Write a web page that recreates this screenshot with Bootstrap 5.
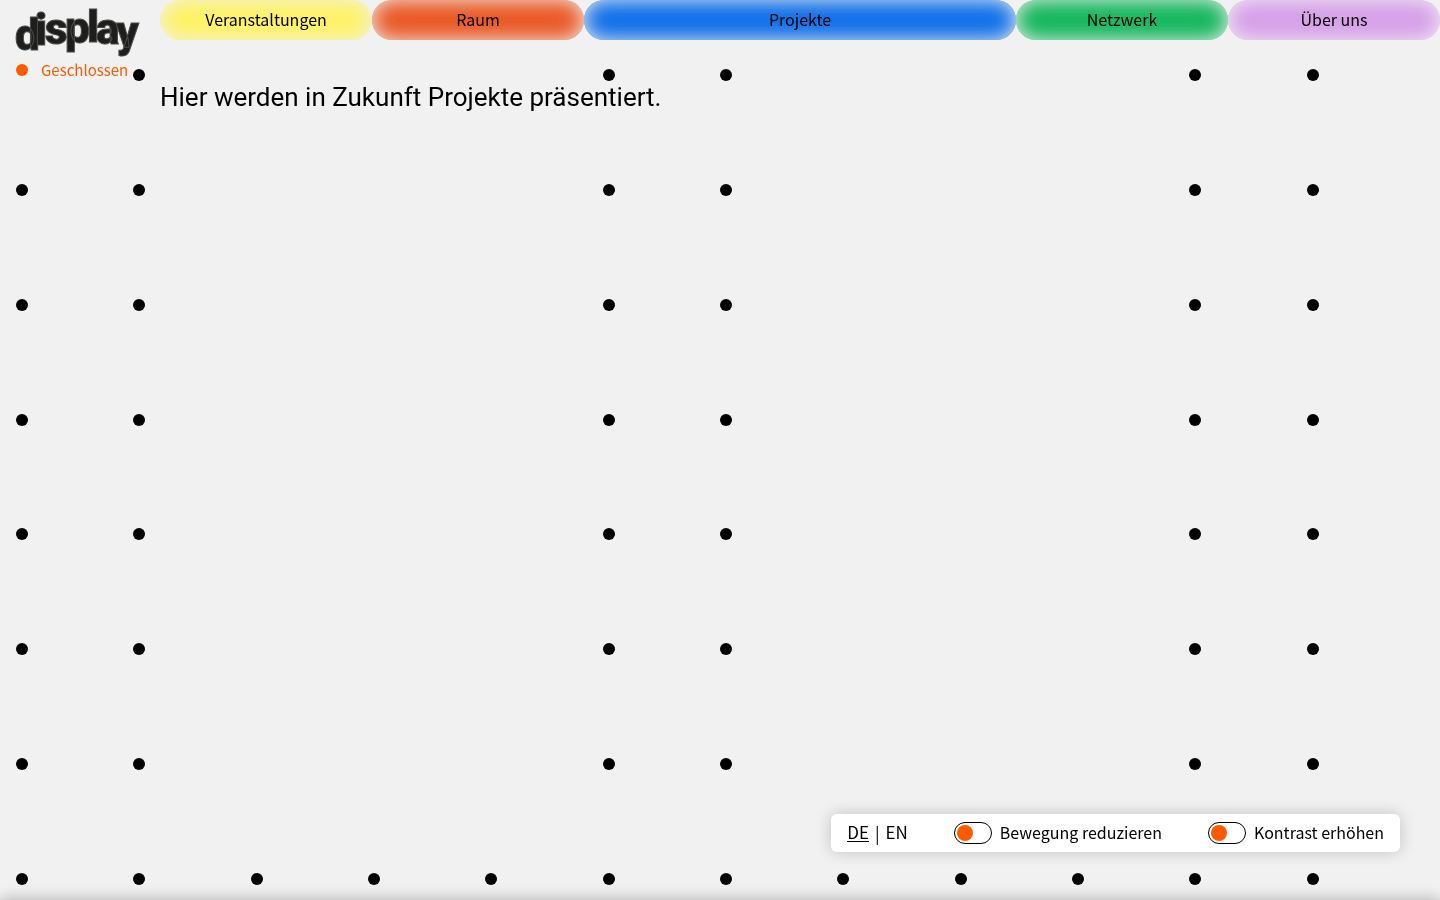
<!DOCTYPE html>
<html lang="de">
<head>
<meta charset="utf-8">
<meta name="viewport" content="width=device-width, initial-scale=1">
<title>display – Projekte</title>
<link href="https://cdn.jsdelivr.net/npm/bootstrap@5.3.0/dist/css/bootstrap.min.css" rel="stylesheet">
<style>
  :root { --paper: #f1f1f1; --accent: #ff5a00; }
  body { background: var(--paper); color: #000; font: 16px/24px "Noto Sans CJK JP", "Noto Sans", sans-serif; overflow: hidden; }
  a { color: inherit; text-decoration: none; }
  .brand-col { width: 160px; padding-left: 16px; }
  .wordmark { display: block; width: 128px; height: 60px; overflow: visible; }
  .wordmark text { font: 900 44px Roboto, sans-serif; fill: #1e1e1c; stroke: #4a4a48; stroke-width: 1px; }
  .status { color: var(--accent); font-size: 15px; line-height: 20px; gap: 13px; }
  .spot { width: 12px; height: 12px; border-radius: 50%; background: currentColor; }
  .main-nav { display: grid; grid-template-columns: 53fr 53fr 108fr 53fr 53fr; }
  .pill { height: 40px; padding-bottom: 2px; border-radius: 20px; box-shadow: inset 0 0 20px var(--paper); }
  .pill-yellow { background: #fef264; }
  .pill-orange { background: #ea5824; }
  .pill-blue { background: #0f6fe9; }
  .pill-green { background: #13b65c; }
  .pill-lilac { background: #d69fe8; }
  .intro { font: 26px/36px Roboto, sans-serif; margin-top: 39px; }
  /* dot raster behind the page */
  .raster { top: 69px; bottom: 15px; z-index: -1; padding: 0 16px; }
  .raster-row { display: grid; grid-template-columns: repeat(12, 1fr); }
  .options { right: 40px; bottom: 48px; height: 38px; padding: 0 16px; gap: 46px; border-radius: 6px; box-shadow: 0 0 16px rgba(0, 0, 0, .2); }
  .options label { padding-bottom: 2px; }
  .languages { font-size: 17px; gap: 6px; line-height: 18px; padding-bottom: 1px; }
  .languages a { border-bottom: 1px solid transparent; }
  .languages .current { border-color: #000; }
  .toggle { appearance: none; width: 38px; height: 22px; margin: 0; border: 1px solid #000; border-radius: 11px; display: flex; align-items: center; padding-left: 2px; background: #fff; }
  .toggle::before { content: ""; width: 16px; height: 16px; border-radius: 50%; background: var(--accent); }
  .toggle:checked { justify-content: flex-end; padding: 0 2px 0 0; }
  .drawer { top: 100%; height: 40px; box-shadow: 0 0 16px rgba(0, 0, 0, .3); }
</style>
</head>
<body>
<div class="raster position-fixed start-0 end-0 d-flex flex-column justify-content-between" id="raster" aria-hidden="true"></div>

<div class="d-flex">
  <header class="brand-col flex-shrink-0">
    <a href="#" aria-label="display">
      <svg class="wordmark" viewBox="0 0 128 60"><text x="-1 19 29 49 71 80 100" y="50 45 44 43 42 44 47">display</text></svg>
    </a>
    <a href="#" class="status d-flex align-items-center"><span class="spot"></span>Geschlossen</a>
  </header>
  <div class="flex-grow-1">
    <nav class="main-nav" aria-label="Hauptnavigation">
      <a class="pill pill-yellow d-flex align-items-center justify-content-center" href="#">Veranstaltungen</a>
      <a class="pill pill-orange d-flex align-items-center justify-content-center" href="#">Raum</a>
      <a class="pill pill-blue d-flex align-items-center justify-content-center" href="#" aria-current="page">Projekte</a>
      <a class="pill pill-green d-flex align-items-center justify-content-center" href="#">Netzwerk</a>
      <a class="pill pill-lilac d-flex align-items-center justify-content-center" href="#">Über uns</a>
    </nav>
    <main><p class="intro mb-0">Hier werden in Zukunft Projekte präsentiert.</p></main>
  </div>
</div>

<div class="options position-fixed bg-white d-flex align-items-center">
  <div class="languages d-flex align-items-center"><a class="current" href="#">DE</a><span>|</span><a href="#">EN</a></div>
  <div class="d-flex align-items-center gap-2"><input class="toggle" type="checkbox" role="switch" id="motion"><label for="motion">Bewegung reduzieren</label></div>
  <div class="d-flex align-items-center gap-2"><input class="toggle" type="checkbox" role="switch" id="contrast"><label for="contrast">Kontrast erhöhen</label></div>
</div>
<div class="drawer position-fixed start-0 end-0"></div>

<script src="https://cdn.jsdelivr.net/npm/bootstrap@5.3.0/dist/js/bootstrap.bundle.min.js"></script>
<script>
  // Column pattern per row: 1 shows a dot, 0 leaves the cell empty.
  const rows = ['010001100011', ...Array(6).fill('110001100011'), '111111111111'];
  document.getElementById('raster').innerHTML = rows.map(row =>
    '<div class="raster-row">' + [...row].map(c =>
      `<span class="spot${c === '0' ? ' invisible' : ''}"></span>`).join('') + '</div>').join('');
</script>
</body>
</html>
